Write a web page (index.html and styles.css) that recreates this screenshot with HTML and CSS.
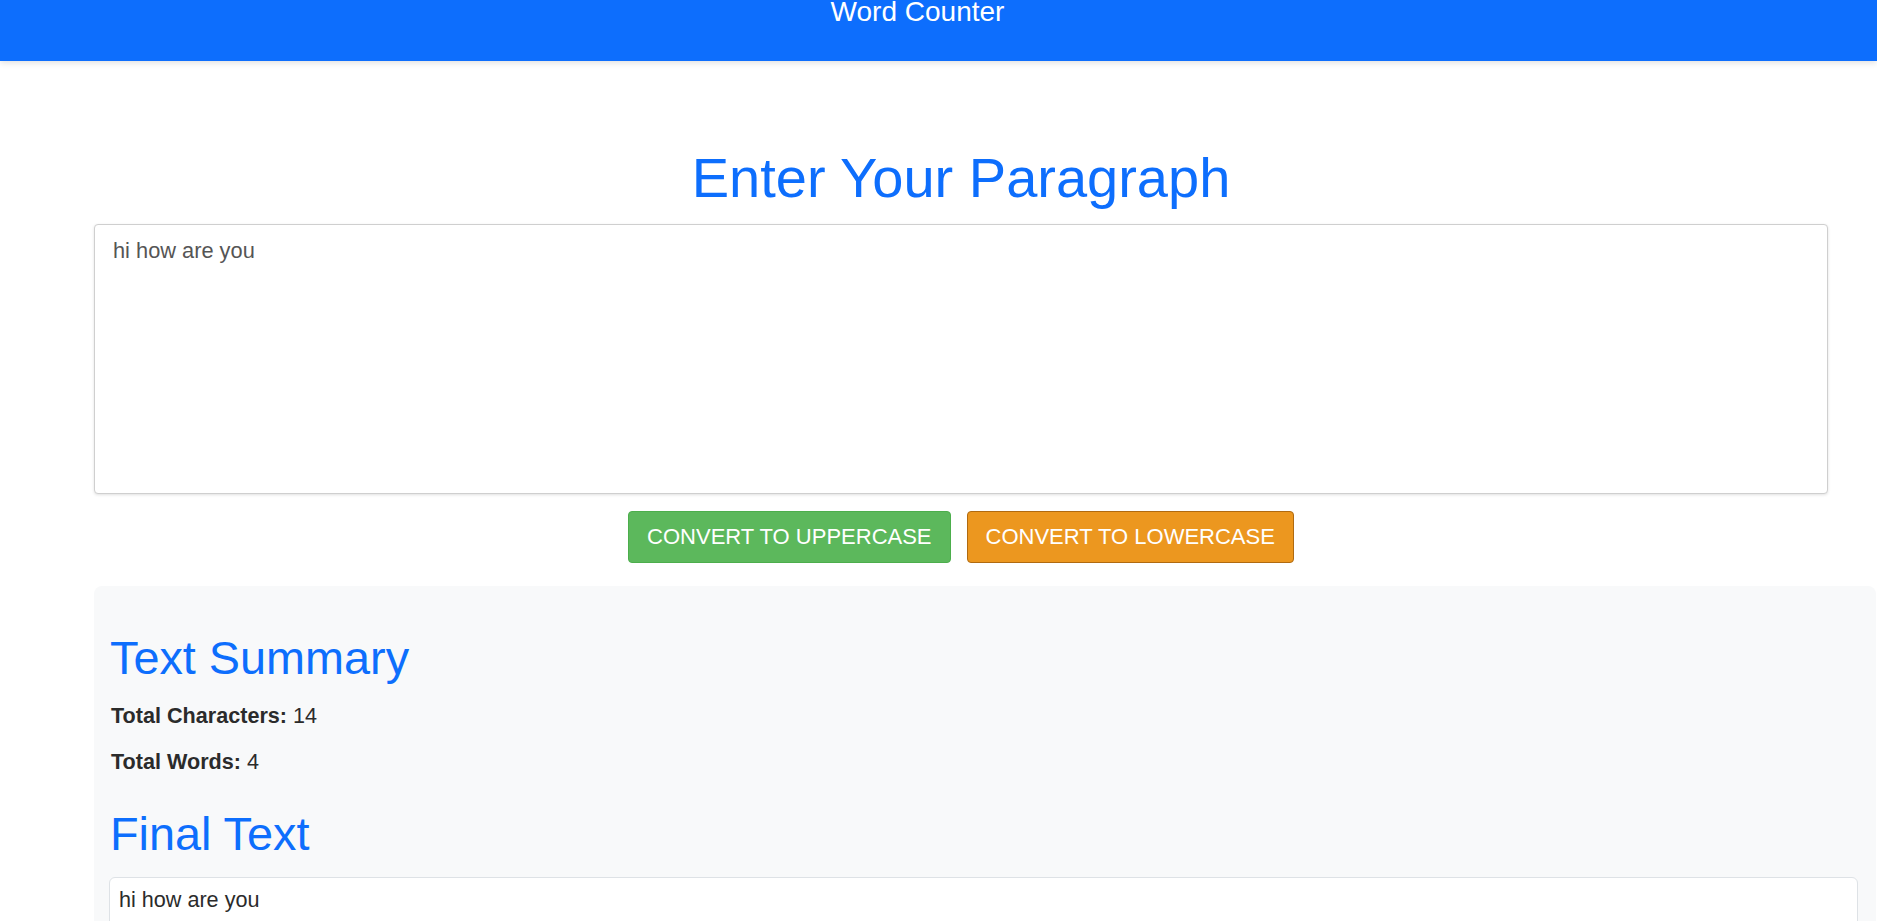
FILE: index.html
```html
<!DOCTYPE html>
<html lang="en">
<head>
<meta charset="utf-8">
<title>Word Counter</title>
<link rel="stylesheet" href="styles.css">
</head>
<body>
<header class="topbar">
  <div class="brand">Word Counter</div>
</header>
<main class="container">
  <h1 class="title">Enter Your Paragraph</h1>
  <textarea class="para" rows="6">hi how are you</textarea>
  <div class="actions">
    <button class="btn btn-upper">CONVERT TO UPPERCASE</button>
    <button class="btn btn-lower">CONVERT TO LOWERCASE</button>
  </div>
  <section class="summary">
    <h2 class="sub first">Text Summary</h2>
    <p class="stat"><strong>Total Characters:</strong> 14</p>
    <p class="stat"><strong>Total Words:</strong> 4</p>
    <h2 class="sub">Final Text</h2>
    <div class="final">hi how are you</div>
  </section>
</main>
</body>
</html>
```
FILE: styles.css
```css
html, body {
  margin: 0;
  padding: 0;
  overflow-x: hidden;
}
body {
  font-family: "Liberation Sans", Arial, sans-serif;
  color: #212529;
  background: #fff;
  font-size: 21.6px;
}
.topbar {
  height: 61px;
  background: #0d6efd;
  box-shadow: 0 2px 6px rgba(0, 0, 0, 0.12);
  padding-right: 42px;
  box-sizing: border-box;
}
.brand {
  text-align: center;
  color: #fff;
  font-size: 28px;
  line-height: 24px;
}
.container {
  margin-left: 94px;
  width: 1734px;
  padding-top: 84px;
}
.title {
  margin: 0 0 13px;
  text-align: center;
  color: #0d6efd;
  font-weight: 400;
  font-size: 56px;
  line-height: 66px;
}
.para {
  display: block;
  box-sizing: border-box;
  width: 100%;
  height: 270px;
  margin: 0;
  padding: 9.6px 18px;
  border: 1px solid #cfcfcf;
  border-radius: 4px;
  box-shadow: 0 1px 3px rgba(0, 0, 0, 0.12);
  font-family: "Liberation Sans", Arial, sans-serif;
  font-size: 21.8px;
  line-height: 32.4px;
  color: #555;
  resize: none;
  outline: none;
}
.actions {
  display: flex;
  justify-content: center;
  gap: 16px;
  margin-top: 17px;
}
.btn {
  font-family: "Liberation Sans", Arial, sans-serif;
  font-size: 22px;
  line-height: 32.4px;
  padding: 9px 18px;
  border-radius: 4px;
  color: #fff;
  cursor: pointer;
}
.btn-upper {
  background: #5cb85c;
  border: 1px solid #4cae4c;
}
.btn-lower {
  background: #ec971f;
  border: 1px solid #b06a10;
}
.summary {
  width: 1782px;
  box-sizing: border-box;
  margin-top: 23px;
  background: #f8f9fa;
  border-radius: 8px;
  padding: 44.7px 18px 15px 15px;
}
.sub {
  margin: 28.7px 0 13.8px;
  color: #0d6efd;
  font-weight: 400;
  font-size: 46.8px;
  line-height: 54.8px;
  padding-left: 1px;
}
.sub.first {
  margin-top: 0;
}
.stat {
  margin: 0 0 14.3px;
  line-height: 32.4px;
  padding-left: 2px;
  color: #2b2b2b;
}
.final {
  margin-top: 15px;
  background: #fff;
  border: 1px solid #dee2e6;
  border-radius: 6px;
  padding: 6px 9px;
  line-height: 32.4px;
  min-height: 60px;
  color: #2b2b2b;
}
```
